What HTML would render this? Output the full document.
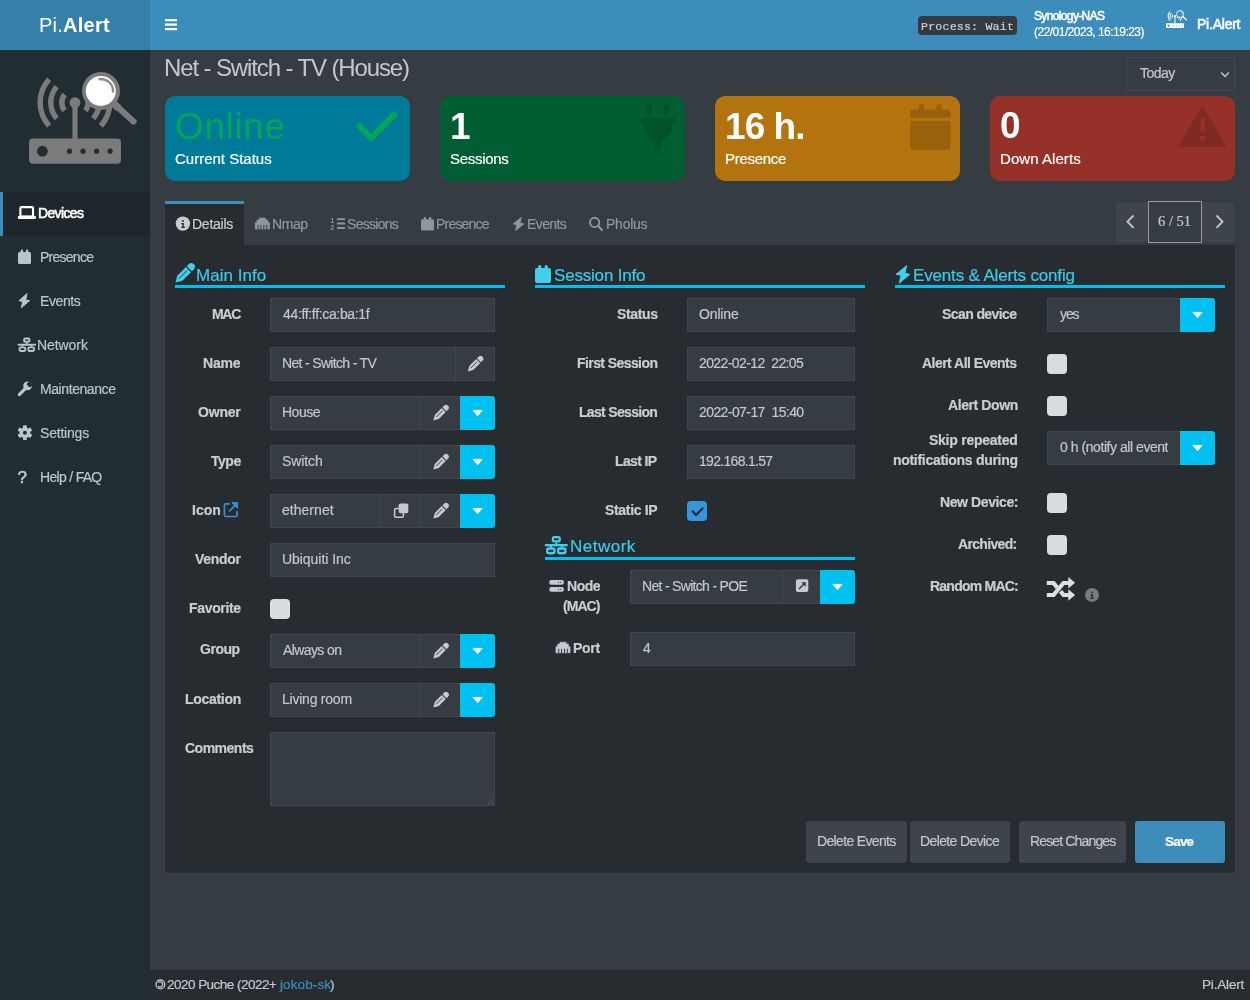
<!DOCTYPE html>
<html><head><meta charset="utf-8"><style>
html,body{margin:0;padding:0;width:1250px;height:1000px;overflow:hidden;background:#353c42;}
body>div, .t{position:absolute;}
div div{position:absolute;}
.t{white-space:pre;line-height:normal;font-family:"Liberation Sans",sans-serif;will-change:transform;-webkit-text-stroke:0.2px currentColor;}
svg{position:absolute;left:0;top:0;}
</style></head><body>
<div style="left:0px;top:0px;width:150px;height:50px;background:#367fa9;"></div>
<div style="left:150px;top:0px;width:1100px;height:50px;background:#3c8dbc;"></div>
<div style="left:0px;top:50px;width:150px;height:950px;background:#222d32;"></div>
<div style="left:0px;top:192px;width:150px;height:44px;background:#1e282c;"></div>
<div style="left:0px;top:192px;width:3px;height:44px;background:#3c8dbc;"></div>
<div style="left:918px;top:16px;width:99px;height:19px;background:#343a40;border-radius:4px;"></div>
<div style="left:1126px;top:57px;width:109px;height:34px;background:transparent;box-sizing:border-box;border:1px solid #40474d;"></div>
<div style="left:165px;top:96px;width:245px;height:85px;background:#007a99;border-radius:10px;"></div>
<div style="left:440px;top:96px;width:245px;height:85px;background:#005e32;border-radius:10px;"></div>
<div style="left:715px;top:96px;width:245px;height:85px;background:#b3730e;border-radius:10px;"></div>
<div style="left:990px;top:96px;width:245px;height:85px;background:#953128;border-radius:10px;"></div>
<div style="left:165px;top:201px;width:79px;height:3px;background:#3c8dbc;"></div>
<div style="left:165px;top:204px;width:79px;height:41px;background:#272c30;"></div>
<div style="left:1116px;top:202px;width:32px;height:40px;background:#3d444b;border-radius:3px 0 0 3px;"></div>
<div style="left:1202px;top:202px;width:32px;height:40px;background:#3d444b;border-radius:0 3px 3px 0;"></div>
<div style="left:1148px;top:201px;width:54px;height:42px;background:#353c42;box-sizing:border-box;border:1px solid #9a9a9a;"></div>
<div style="left:165px;top:245px;width:1070px;height:628px;background:#272c30;border-radius:0 0 3px 3px;"></div>
<div style="left:175px;top:285px;width:330px;height:3px;background:#00c0ef;"></div>
<div style="left:535px;top:285px;width:330px;height:3px;background:#00c0ef;"></div>
<div style="left:895px;top:285px;width:330px;height:3px;background:#00c0ef;"></div>
<div style="left:545px;top:557px;width:310px;height:3px;background:#00c0ef;"></div>
<div style="left:270px;top:298px;width:225px;height:34px;background:#353c42;box-sizing:border-box;border:1px solid #40474d;"></div>
<div style="left:270px;top:347px;width:186px;height:34px;background:#353c42;box-sizing:border-box;border:1px solid #40474d;"></div>
<div style="left:455px;top:347px;width:40px;height:34px;background:#353c42;box-sizing:border-box;border:1px solid #40474d;"></div>
<div style="left:270px;top:396px;width:151px;height:34px;background:#353c42;box-sizing:border-box;border:1px solid #40474d;"></div>
<div style="left:420px;top:396px;width:41px;height:34px;background:#353c42;box-sizing:border-box;border:1px solid #40474d;"></div>
<div style="left:460px;top:396px;width:35px;height:34px;background:#00c0ef;border-radius:0 3px 3px 0;"></div>
<div style="left:270px;top:445px;width:151px;height:34px;background:#353c42;box-sizing:border-box;border:1px solid #40474d;"></div>
<div style="left:420px;top:445px;width:41px;height:34px;background:#353c42;box-sizing:border-box;border:1px solid #40474d;"></div>
<div style="left:460px;top:445px;width:35px;height:34px;background:#00c0ef;border-radius:0 3px 3px 0;"></div>
<div style="left:270px;top:683px;width:151px;height:34px;background:#353c42;box-sizing:border-box;border:1px solid #40474d;"></div>
<div style="left:420px;top:683px;width:41px;height:34px;background:#353c42;box-sizing:border-box;border:1px solid #40474d;"></div>
<div style="left:460px;top:683px;width:35px;height:34px;background:#00c0ef;border-radius:0 3px 3px 0;"></div>
<div style="left:270px;top:634px;width:151px;height:34px;background:#353c42;box-sizing:border-box;border:1px solid #40474d;"></div>
<div style="left:420px;top:634px;width:41px;height:34px;background:#353c42;box-sizing:border-box;border:1px solid #40474d;"></div>
<div style="left:460px;top:634px;width:35px;height:34px;background:#00c0ef;border-radius:0 3px 3px 0;"></div>
<div style="left:270px;top:494px;width:111px;height:34px;background:#353c42;box-sizing:border-box;border:1px solid #40474d;"></div>
<div style="left:380px;top:494px;width:41px;height:34px;background:#353c42;box-sizing:border-box;border:1px solid #40474d;"></div>
<div style="left:420px;top:494px;width:41px;height:34px;background:#353c42;box-sizing:border-box;border:1px solid #40474d;"></div>
<div style="left:460px;top:494px;width:35px;height:34px;background:#00c0ef;border-radius:0 3px 3px 0;"></div>
<div style="left:270px;top:543px;width:225px;height:34px;background:#353c42;box-sizing:border-box;border:1px solid #40474d;"></div>
<div style="left:270px;top:599px;width:20px;height:20px;background:#d9dde0;border-radius:4px;"></div>
<div style="left:270px;top:732px;width:225px;height:74px;background:#353c42;box-sizing:border-box;border:1px solid #40474d;"></div>
<div style="left:687px;top:298px;width:168px;height:34px;background:#353c42;box-sizing:border-box;border:1px solid #40474d;"></div>
<div style="left:687px;top:347px;width:168px;height:34px;background:#353c42;box-sizing:border-box;border:1px solid #40474d;"></div>
<div style="left:687px;top:396px;width:168px;height:34px;background:#353c42;box-sizing:border-box;border:1px solid #40474d;"></div>
<div style="left:687px;top:445px;width:168px;height:34px;background:#353c42;box-sizing:border-box;border:1px solid #40474d;"></div>
<div style="left:687px;top:501px;width:20px;height:20px;background:#3796da;border-radius:4px;"></div>
<div style="left:630px;top:570px;width:153px;height:34px;background:#353c42;box-sizing:border-box;border:1px solid #40474d;"></div>
<div style="left:782px;top:570px;width:39px;height:34px;background:#353c42;box-sizing:border-box;border:1px solid #40474d;"></div>
<div style="left:820px;top:570px;width:35px;height:34px;background:#00c0ef;border-radius:0 3px 3px 0;"></div>
<div style="left:630px;top:632px;width:225px;height:34px;background:#353c42;box-sizing:border-box;border:1px solid #40474d;"></div>
<div style="left:1047px;top:298px;width:134px;height:34px;background:#353c42;box-sizing:border-box;border:1px solid #40474d;"></div>
<div style="left:1180px;top:298px;width:35px;height:34px;background:#00c0ef;border-radius:0 3px 3px 0;"></div>
<div style="left:1047px;top:354px;width:20px;height:20px;background:#d9dde0;border-radius:4px;"></div>
<div style="left:1047px;top:396px;width:20px;height:20px;background:#d9dde0;border-radius:4px;"></div>
<div style="left:1047px;top:493px;width:20px;height:20px;background:#d9dde0;border-radius:4px;"></div>
<div style="left:1047px;top:535px;width:20px;height:20px;background:#d9dde0;border-radius:4px;"></div>
<div style="left:1047px;top:431px;width:134px;height:34px;background:#353c42;box-sizing:border-box;border:1px solid #40474d;"></div>
<div style="left:1180px;top:431px;width:35px;height:34px;background:#00c0ef;border-radius:0 3px 3px 0;"></div>
<div style="left:806px;top:821px;width:101px;height:42px;background:#3d444b;border-radius:3px;"></div>
<div style="left:910px;top:821px;width:100px;height:42px;background:#3d444b;border-radius:3px;"></div>
<div style="left:1019px;top:821px;width:107px;height:42px;background:#3d444b;border-radius:3px;"></div>
<div style="left:1135px;top:821px;width:90px;height:42px;background:#3c8dbc;border-radius:3px;"></div>
<div style="left:150px;top:970px;width:1100px;height:30px;background:#272c30;"></div>
<div class="t" style="left:39.3px;top:14px;font-family:'Liberation Sans';font-size:20px;font-weight:400;letter-spacing:0.24px;color:#fff;-webkit-text-stroke:0;">Pi.<b>Alert</b></div>
<div class="t" style="left:921.4px;top:20px;font-family:'Liberation Mono';font-size:11.6px;font-weight:400;letter-spacing:0.20px;color:#d0d0d0;">Process: Wait</div>
<div class="t" style="left:1034.0px;top:9px;font-family:'Liberation Sans';font-size:12px;font-weight:400;letter-spacing:-0.64px;color:#fff;-webkit-text-stroke:0.55px currentColor;">Synology-NAS</div>
<div class="t" style="left:1034.0px;top:25px;font-family:'Liberation Sans';font-size:12px;font-weight:400;letter-spacing:-0.52px;color:#fff;">(22/01/2023, 16:19:23)</div>
<div class="t" style="left:1196.6px;top:15.7px;font-family:'Liberation Sans';font-size:14px;font-weight:400;letter-spacing:-0.23px;color:#fff;-webkit-text-stroke:0.55px currentColor;">Pi.Alert</div>
<div class="t" style="left:37.7px;top:205px;font-family:'Liberation Sans';font-size:14px;font-weight:400;letter-spacing:-0.65px;color:#fff;-webkit-text-stroke:0.55px currentColor;">Devices</div>
<div class="t" style="left:40.4px;top:249px;font-family:'Liberation Sans';font-size:14px;font-weight:400;letter-spacing:-0.74px;color:#b8c7ce;">Presence</div>
<div class="t" style="left:40.0px;top:293px;font-family:'Liberation Sans';font-size:14px;font-weight:400;letter-spacing:-0.40px;color:#b8c7ce;">Events</div>
<div class="t" style="left:37.4px;top:337px;font-family:'Liberation Sans';font-size:14px;font-weight:400;letter-spacing:-0.07px;color:#b8c7ce;">Network</div>
<div class="t" style="left:40.0px;top:381px;font-family:'Liberation Sans';font-size:14px;font-weight:400;letter-spacing:-0.42px;color:#b8c7ce;">Maintenance</div>
<div class="t" style="left:40.0px;top:425px;font-family:'Liberation Sans';font-size:14px;font-weight:400;letter-spacing:-0.20px;color:#b8c7ce;">Settings</div>
<div class="t" style="left:40.0px;top:469px;font-family:'Liberation Sans';font-size:14px;font-weight:400;letter-spacing:-0.69px;color:#b8c7ce;">Help / FAQ</div>
<div class="t" style="left:164.0px;top:54px;font-family:'Liberation Sans';font-size:24px;font-weight:400;letter-spacing:-1.12px;color:#c3c8cd;-webkit-text-stroke:0;">Net - Switch - TV (House)</div>
<div class="t" style="left:1140.0px;top:65px;font-family:'Liberation Sans';font-size:14px;font-weight:400;letter-spacing:-0.50px;color:#c3c8cd;">Today</div>
<div class="t" style="left:174.6px;top:106px;font-family:'Liberation Sans';font-size:37px;font-weight:400;letter-spacing:0.64px;color:#00a65a;-webkit-text-stroke:0;">Online</div>
<div class="t" style="left:175.0px;top:150.4px;font-family:'Liberation Sans';font-size:15px;font-weight:400;letter-spacing:0.00px;color:#fff;">Current Status</div>
<div class="t" style="left:450.0px;top:106px;font-family:'Liberation Sans';font-size:37px;font-weight:600;letter-spacing:0.00px;color:#fff;-webkit-text-stroke:0;">1</div>
<div class="t" style="left:450.0px;top:150.4px;font-family:'Liberation Sans';font-size:15px;font-weight:400;letter-spacing:-0.29px;color:#fff;">Sessions</div>
<div class="t" style="left:724.8px;top:106px;font-family:'Liberation Sans';font-size:37px;font-weight:600;letter-spacing:-0.95px;color:#fff;-webkit-text-stroke:0;">16 h.</div>
<div class="t" style="left:724.7px;top:150.4px;font-family:'Liberation Sans';font-size:15px;font-weight:400;letter-spacing:-0.30px;color:#fff;">Presence</div>
<div class="t" style="left:1000.4px;top:105px;font-family:'Liberation Sans';font-size:37px;font-weight:600;letter-spacing:0.00px;color:#fff;-webkit-text-stroke:0;">0</div>
<div class="t" style="left:999.7px;top:150.4px;font-family:'Liberation Sans';font-size:15px;font-weight:400;letter-spacing:0.06px;color:#fff;">Down Alerts</div>
<div class="t" style="left:192.3px;top:216px;font-family:'Liberation Sans';font-size:14px;font-weight:400;letter-spacing:-0.25px;color:#c8cdd2;">Details</div>
<div class="t" style="left:271.9px;top:216px;font-family:'Liberation Sans';font-size:14px;font-weight:400;letter-spacing:-0.43px;color:#8f979e;">Nmap</div>
<div class="t" style="left:347.0px;top:216px;font-family:'Liberation Sans';font-size:14px;font-weight:400;letter-spacing:-0.71px;color:#8f979e;">Sessions</div>
<div class="t" style="left:436.0px;top:216px;font-family:'Liberation Sans';font-size:14px;font-weight:400;letter-spacing:-0.80px;color:#8f979e;">Presence</div>
<div class="t" style="left:527.0px;top:216px;font-family:'Liberation Sans';font-size:14px;font-weight:400;letter-spacing:-0.60px;color:#8f979e;">Events</div>
<div class="t" style="left:605.6px;top:216px;font-family:'Liberation Sans';font-size:14px;font-weight:400;letter-spacing:-0.24px;color:#8f979e;">Pholus</div>
<div class="t" style="left:1158.0px;top:212.6px;font-family:'Liberation Serif';font-size:14.5px;font-weight:400;letter-spacing:0.00px;color:#c3c8cd;">6 / 51</div>
<div class="t" style="left:196.4px;top:266px;font-family:'Liberation Sans';font-size:17px;font-weight:400;letter-spacing:0.03px;color:#3fc9e9;">Main Info</div>
<div class="t" style="left:553.8px;top:266px;font-family:'Liberation Sans';font-size:17px;font-weight:400;letter-spacing:-0.19px;color:#3fc9e9;">Session Info</div>
<div class="t" style="left:913.4px;top:266px;font-family:'Liberation Sans';font-size:17px;font-weight:400;letter-spacing:-0.16px;color:#3fc9e9;">Events &amp; Alerts config</div>
<div class="t" style="left:570.4px;top:537px;font-family:'Liberation Sans';font-size:17px;font-weight:400;letter-spacing:0.50px;color:#3fc9e9;">Network</div>
<div class="t" style="left:212.0px;top:306px;font-family:'Liberation Sans';font-size:14px;font-weight:700;letter-spacing:-1.30px;color:#c9cdd1;">MAC</div>
<div class="t" style="left:203.0px;top:355px;font-family:'Liberation Sans';font-size:14px;font-weight:700;letter-spacing:-0.20px;color:#c9cdd1;">Name</div>
<div class="t" style="left:198.2px;top:404px;font-family:'Liberation Sans';font-size:14px;font-weight:700;letter-spacing:-0.20px;color:#c9cdd1;">Owner</div>
<div class="t" style="left:210.8px;top:453px;font-family:'Liberation Sans';font-size:14px;font-weight:700;letter-spacing:-0.47px;color:#c9cdd1;">Type</div>
<div class="t" style="left:191.5px;top:502px;font-family:'Liberation Sans';font-size:14px;font-weight:700;letter-spacing:0.00px;color:#c9cdd1;">Icon</div>
<div class="t" style="left:195.0px;top:551px;font-family:'Liberation Sans';font-size:14px;font-weight:700;letter-spacing:-0.30px;color:#c9cdd1;">Vendor</div>
<div class="t" style="left:188.7px;top:600px;font-family:'Liberation Sans';font-size:14px;font-weight:700;letter-spacing:-0.33px;color:#c9cdd1;">Favorite</div>
<div class="t" style="left:200.3px;top:641px;font-family:'Liberation Sans';font-size:14px;font-weight:700;letter-spacing:-0.48px;color:#c9cdd1;">Group</div>
<div class="t" style="left:184.5px;top:691px;font-family:'Liberation Sans';font-size:14px;font-weight:700;letter-spacing:-0.30px;color:#c9cdd1;">Location</div>
<div class="t" style="left:184.5px;top:740px;font-family:'Liberation Sans';font-size:14px;font-weight:700;letter-spacing:-0.50px;color:#c9cdd1;">Comments</div>
<div class="t" style="left:283.0px;top:306px;font-family:'Liberation Sans';font-size:14px;font-weight:400;letter-spacing:-0.34px;color:#c1c7cc;">44:ff:ff:ca:ba:1f</div>
<div class="t" style="left:282.3px;top:355px;font-family:'Liberation Sans';font-size:14px;font-weight:400;letter-spacing:-0.67px;color:#c1c7cc;">Net - Switch - TV</div>
<div class="t" style="left:282.0px;top:404px;font-family:'Liberation Sans';font-size:14px;font-weight:400;letter-spacing:-0.50px;color:#c1c7cc;">House</div>
<div class="t" style="left:282.0px;top:453px;font-family:'Liberation Sans';font-size:14px;font-weight:400;letter-spacing:-0.10px;color:#c1c7cc;">Switch</div>
<div class="t" style="left:282.0px;top:502px;font-family:'Liberation Sans';font-size:14px;font-weight:400;letter-spacing:0.03px;color:#c1c7cc;">ethernet</div>
<div class="t" style="left:282.2px;top:551px;font-family:'Liberation Sans';font-size:14px;font-weight:400;letter-spacing:-0.05px;color:#c1c7cc;">Ubiquiti Inc</div>
<div class="t" style="left:283.0px;top:642px;font-family:'Liberation Sans';font-size:14px;font-weight:400;letter-spacing:-0.60px;color:#c1c7cc;">Always on</div>
<div class="t" style="left:282.0px;top:691px;font-family:'Liberation Sans';font-size:14px;font-weight:400;letter-spacing:-0.23px;color:#c1c7cc;">Living room</div>
<div class="t" style="left:616.8px;top:306px;font-family:'Liberation Sans';font-size:14px;font-weight:700;letter-spacing:-0.36px;color:#c9cdd1;">Status</div>
<div class="t" style="left:577.0px;top:355px;font-family:'Liberation Sans';font-size:14px;font-weight:700;letter-spacing:-0.58px;color:#c9cdd1;">First Session</div>
<div class="t" style="left:578.5px;top:404px;font-family:'Liberation Sans';font-size:14px;font-weight:700;letter-spacing:-0.68px;color:#c9cdd1;">Last Session</div>
<div class="t" style="left:614.7px;top:453px;font-family:'Liberation Sans';font-size:14px;font-weight:700;letter-spacing:-0.62px;color:#c9cdd1;">Last IP</div>
<div class="t" style="left:604.6px;top:502px;font-family:'Liberation Sans';font-size:14px;font-weight:700;letter-spacing:-0.33px;color:#c9cdd1;">Static IP</div>
<div class="t" style="left:698.9px;top:306px;font-family:'Liberation Sans';font-size:14px;font-weight:400;letter-spacing:-0.14px;color:#c1c7cc;">Online</div>
<div class="t" style="left:699.0px;top:355px;font-family:'Liberation Sans';font-size:14px;font-weight:400;letter-spacing:-0.60px;color:#c1c7cc;">2022-02-12&nbsp; 22:05</div>
<div class="t" style="left:699.0px;top:404px;font-family:'Liberation Sans';font-size:14px;font-weight:400;letter-spacing:-0.58px;color:#c1c7cc;">2022-07-17&nbsp; 15:40</div>
<div class="t" style="left:699.0px;top:453px;font-family:'Liberation Sans';font-size:14px;font-weight:400;letter-spacing:-0.69px;color:#c1c7cc;">192.168.1.57</div>
<div class="t" style="left:566.8px;top:578px;font-family:'Liberation Sans';font-size:14px;font-weight:700;letter-spacing:-0.47px;color:#c9cdd1;">Node</div>
<div class="t" style="left:563.3px;top:598px;font-family:'Liberation Sans';font-size:14px;font-weight:700;letter-spacing:-0.97px;color:#c9cdd1;">(MAC)</div>
<div class="t" style="left:572.9px;top:640px;font-family:'Liberation Sans';font-size:14px;font-weight:700;letter-spacing:-0.30px;color:#c9cdd1;">Port</div>
<div class="t" style="left:642.3px;top:578px;font-family:'Liberation Sans';font-size:14px;font-weight:400;letter-spacing:-0.69px;color:#c1c7cc;">Net - Switch - POE</div>
<div class="t" style="left:643.0px;top:640px;font-family:'Liberation Sans';font-size:14px;font-weight:400;letter-spacing:0.00px;color:#c1c7cc;">4</div>
<div class="t" style="left:941.9px;top:306px;font-family:'Liberation Sans';font-size:14px;font-weight:700;letter-spacing:-0.59px;color:#c9cdd1;">Scan device</div>
<div class="t" style="left:922.0px;top:355px;font-family:'Liberation Sans';font-size:14px;font-weight:700;letter-spacing:-0.53px;color:#c9cdd1;">Alert All Events</div>
<div class="t" style="left:947.7px;top:397px;font-family:'Liberation Sans';font-size:14px;font-weight:700;letter-spacing:-0.41px;color:#c9cdd1;">Alert Down</div>
<div class="t" style="left:929.0px;top:432px;font-family:'Liberation Sans';font-size:14px;font-weight:700;letter-spacing:-0.25px;color:#c9cdd1;">Skip repeated</div>
<div class="t" style="left:892.7px;top:452px;font-family:'Liberation Sans';font-size:14px;font-weight:700;letter-spacing:-0.30px;color:#c9cdd1;">notifications during</div>
<div class="t" style="left:940.0px;top:494px;font-family:'Liberation Sans';font-size:14px;font-weight:700;letter-spacing:-0.40px;color:#c9cdd1;">New Device:</div>
<div class="t" style="left:958.4px;top:536px;font-family:'Liberation Sans';font-size:14px;font-weight:700;letter-spacing:-0.67px;color:#c9cdd1;">Archived:</div>
<div class="t" style="left:929.7px;top:578px;font-family:'Liberation Sans';font-size:14px;font-weight:700;letter-spacing:-0.77px;color:#c9cdd1;">Random MAC:</div>
<div class="t" style="left:1060.2px;top:306px;font-family:'Liberation Sans';font-size:14px;font-weight:400;letter-spacing:-1.10px;color:#c1c7cc;">yes</div>
<div style="left:1047px;top:431px;width:121px;height:34px;overflow:hidden"><div class="t" style="left:13.0px;top:8px;font-size:14px;font-weight:400;letter-spacing:-0.45px;color:#c1c7cc">0 h (notify all events)</div></div>
<div class="t" style="left:816.6px;top:833px;font-family:'Liberation Sans';font-size:14px;font-weight:400;letter-spacing:-0.66px;color:#c1c7cc;">Delete Events</div>
<div class="t" style="left:919.5px;top:833px;font-family:'Liberation Sans';font-size:14px;font-weight:400;letter-spacing:-0.62px;color:#c1c7cc;">Delete Device</div>
<div class="t" style="left:1029.6px;top:833px;font-family:'Liberation Sans';font-size:14px;font-weight:400;letter-spacing:-0.85px;color:#c1c7cc;">Reset Changes</div>
<div class="t" style="left:1165.4px;top:834px;font-family:'Liberation Sans';font-size:13.5px;font-weight:700;letter-spacing:-0.80px;color:#fff;">Save</div>
<div class="t" style="left:167.4px;top:977px;font-family:'Liberation Sans';font-size:13.5px;font-weight:400;letter-spacing:-0.53px;color:#c3c8cd;">2020 Puche (2022+</div>
<div class="t" style="left:279.6px;top:977px;font-family:'Liberation Sans';font-size:13.5px;font-weight:400;letter-spacing:0.11px;color:#3c8dbc;">jokob-sk</div>
<div class="t" style="left:330.4px;top:977px;font-family:'Liberation Sans';font-size:13.5px;font-weight:400;letter-spacing:0.00px;color:#c3c8cd;">)</div>
<div class="t" style="left:1202.2px;top:977px;font-family:'Liberation Sans';font-size:13.5px;font-weight:400;letter-spacing:-0.17px;color:#c3c8cd;">Pi.Alert</div>
<svg width="1250" height="1000" viewBox="0 0 1250 1000">
<g fill="#fff"><rect x="165" y="19" width="12" height="2.2"/><rect x="165" y="23.5" width="12" height="2.2"/><rect x="165" y="28" width="12" height="2.2"/></g>
<g fill="none" stroke="#7b7b7b" stroke-width="5.4" stroke-linecap="butt"><path d="M64.6,94.5 A13.2,13.2 0 0 0 64.6,110.7"/><path d="M85.4,94.5 A13.2,13.2 0 0 1 85.4,110.7"/><path d="M56.7,86.7 A24.2,24.2 0 0 0 56.7,118.5"/><path d="M93.3,86.7 A24.2,24.2 0 0 1 93.3,118.5"/><path d="M49.1,79.3 A34.8,34.8 0 0 0 49.1,125.9"/><path d="M100.9,79.3 A34.8,34.8 0 0 1 100.9,125.9"/></g><g fill="#7b7b7b"><rect x="29" y="138.6" width="92" height="25.2" rx="4"/><rect x="72.4" y="102" width="5.2" height="37"/><circle cx="75" cy="102.6" r="5.4"/></g><g fill="#222d32"><circle cx="42.4" cy="151.2" r="5.4"/><circle cx="69.5" cy="151.2" r="2.6"/><circle cx="83" cy="151.2" r="2.6"/><circle cx="96.6" cy="151.2" r="2.6"/><circle cx="110" cy="151.2" r="2.6"/></g><line x1="112" y1="102" x2="133.5" y2="121.5" stroke="#7b7b7b" stroke-width="6.2" stroke-linecap="round"/><line x1="112" y1="102" x2="119" y2="108.5" stroke="#7b7b7b" stroke-width="7.5"/><circle cx="101" cy="91" r="19" fill="#7b7b7b"/><circle cx="100.8" cy="91" r="15" fill="#fff"/><path d="M98.5,79.2 A12.2,12.2 0 0 1 113,92.5" fill="none" stroke="#7b7b7b" stroke-width="2.4" opacity="0.85"/>
<g transform="translate(1166,10) scale(0.195) translate(-29,-71)"><g fill="none" stroke="#fff" stroke-width="5.4" stroke-linecap="butt"><path d="M64.6,94.5 A13.2,13.2 0 0 0 64.6,110.7"/><path d="M85.4,94.5 A13.2,13.2 0 0 1 85.4,110.7"/><path d="M56.7,86.7 A24.2,24.2 0 0 0 56.7,118.5"/><path d="M93.3,86.7 A24.2,24.2 0 0 1 93.3,118.5"/><path d="M49.1,79.3 A34.8,34.8 0 0 0 49.1,125.9"/><path d="M100.9,79.3 A34.8,34.8 0 0 1 100.9,125.9"/></g><g fill="#fff"><rect x="29" y="138.6" width="92" height="25.2" rx="4"/><rect x="72.4" y="102" width="5.2" height="37"/><circle cx="75" cy="102.6" r="5.4"/></g><g fill="#3c8dbc"><circle cx="42.4" cy="151.2" r="5.4"/><circle cx="69.5" cy="151.2" r="2.6"/><circle cx="83" cy="151.2" r="2.6"/><circle cx="96.6" cy="151.2" r="2.6"/><circle cx="110" cy="151.2" r="2.6"/></g><line x1="112" y1="102" x2="133.5" y2="121.5" stroke="#fff" stroke-width="6.2" stroke-linecap="round"/><line x1="112" y1="102" x2="119" y2="108.5" stroke="#fff" stroke-width="7.5"/><circle cx="101" cy="91" r="19" fill="#fff"/><circle cx="100.8" cy="91" r="15" fill="#3c8dbc"/><path d="M98.5,79.2 A12.2,12.2 0 0 1 113,92.5" fill="none" stroke="#fff" stroke-width="2.4" opacity="0.85"/></g>
<g fill="none" stroke="#fff" stroke-width="2.1"><rect x="20.4" y="207.1" width="12.6" height="9.5" rx="1"/></g><rect x="17.9" y="215.8" width="18" height="3.3" rx="1.2" fill="#fff"/>
<g fill="#b8c7ce"><rect x="20.60" y="249.60" width="2.60" height="3.60" rx="1.30"/><rect x="25.80" y="249.60" width="2.60" height="3.60" rx="1.30"/><rect x="18" y="251.90" width="13" height="12.10" rx="1.56"/></g>
<path d="M27.06,293.65 L18.92,300.70 L22.77,301.45 L21.34,307.75 L29.48,300.70 L25.63,299.95z" fill="#b8c7ce" stroke="#b8c7ce" stroke-width="1" stroke-linejoin="round"/>
<g fill="none" stroke="#b8c7ce" stroke-width="1.9"><rect x="24.11" y="338.55" width="5.38" height="3.25" rx="1.14"/><line x1="26.80" y1="342.75" x2="26.80" y2="344.75"/><line x1="17.70" y1="344.75" x2="35.90" y2="344.75"/><line x1="22.43" y1="344.75" x2="22.43" y2="346.47"/><rect x="19.56" y="347.42" width="5.74" height="3.53" rx="1.14"/><line x1="31.17" y1="344.75" x2="31.17" y2="346.47"/><rect x="28.30" y="347.42" width="5.74" height="3.53" rx="1.14"/></g>
<g fill="#b8c7ce"><path d="M19.3,394.6 L26.3,387.6" stroke="#b8c7ce" stroke-width="3.2" stroke-linecap="round"/><circle cx="27.6" cy="385.8" r="4.4"/></g><path d="M29.2,381.3 l-2.6,2.6 l1.4,2.2 l2.2,1.4 l2.6,-2.6" fill="#222d32"/>
<g transform="translate(24.9,432.7)" fill="#b8c7ce"><rect x="-1.9" y="-7.4" width="3.8" height="3.6" rx="0.8" transform="rotate(0)"/><rect x="-1.9" y="-7.4" width="3.8" height="3.6" rx="0.8" transform="rotate(60)"/><rect x="-1.9" y="-7.4" width="3.8" height="3.6" rx="0.8" transform="rotate(120)"/><rect x="-1.9" y="-7.4" width="3.8" height="3.6" rx="0.8" transform="rotate(180)"/><rect x="-1.9" y="-7.4" width="3.8" height="3.6" rx="0.8" transform="rotate(240)"/><rect x="-1.9" y="-7.4" width="3.8" height="3.6" rx="0.8" transform="rotate(300)"/><circle r="5.4"/><circle r="2" fill="#222d32"/></g>
<text x="17.4" y="483" font-family="Liberation Sans" font-size="17" fill="#b8c7ce" stroke="#b8c7ce" stroke-width="0.6">?</text>
<polyline points="359.5,126 371,137.6 394.5,114.5" fill="none" stroke="#00a65a" stroke-width="6" stroke-linecap="round" stroke-linejoin="round"/>
<g fill="#00522b"><rect x="646.6" y="104" width="5.4" height="11" rx="2.5"/><rect x="664.2" y="104" width="5.4" height="11" rx="2.5"/><rect x="640.8" y="118" width="34.6" height="5.8" rx="2.9"/><path d="M644,123 h28 v3 a14,14 0 0 1 -11,13.6 v8 a3,3 0 0 1 -6,0 v-8 a14,14 0 0 1 -11,-13.6 z"/></g>
<g fill="#98620c"><rect x="918.86" y="103.70" width="5.40" height="9.22" rx="2.70"/><rect x="936.40" y="103.70" width="5.40" height="9.22" rx="2.70"/><path d="M910.2,112.42 a3,3 0 0 1 3,-3 h34.30 a3,3 0 0 1 3,3 v5.30 h-40.30 z"/><path d="M910.2,121.11 h40.30 v25.69 a3,3 0 0 1 -3,3 h-34.30 a3,3 0 0 1 -3,-3 z"/></g>
<path d="M1202.4,108.2 L1224.1,145.4 L1180.7,145.4 z" fill="#7f2a22" stroke="#7f2a22" stroke-width="3" stroke-linejoin="round"/>
<rect x="1200.3" y="118" width="4.5" height="14" rx="2.2" fill="#953128"/><circle cx="1202.5" cy="138.2" r="2.6" fill="#953128"/>
<circle cx="182.9" cy="223.6" r="7.2" fill="#c8cdd2"/><rect x="182" y="220.2" width="1.8" height="1.6" fill="#272c30"/><path d="M181.3,222.9 h2.5 v3.8 h1.1 v1.3 h-3.6 v-1.3 h1 v-2.5 h-1 z" fill="#272c30"/>
<path d="M255.2,222.62 L256.928,222.62 L256.928,219.98 L259.23199999999997,219.98 L259.23199999999997,218 L265.568,218 L265.568,219.98 L267.872,219.98 L267.872,222.62 L269.59999999999997,222.62 L269.59999999999997,229 L255.2,229 z" fill="#8f979e" stroke="#8f979e" stroke-width="0.6" stroke-linejoin="round"/><rect x="257.63" y="224.82" width="0.9" height="4.18" fill="#353c42"/><rect x="260.51" y="224.82" width="0.9" height="4.18" fill="#353c42"/><rect x="263.39" y="224.82" width="0.9" height="4.18" fill="#353c42"/><rect x="266.27" y="224.82" width="0.9" height="4.18" fill="#353c42"/>
<g fill="#8f979e"><rect x="336.8" y="218.2" width="8.4" height="1.9" rx="0.9"/><rect x="336.8" y="222.6" width="8.4" height="1.9" rx="0.9"/><rect x="336.8" y="227" width="8.4" height="1.9" rx="0.9"/></g><text x="330.6" y="223" font-family="Liberation Sans" font-weight="bold" font-size="6.5" fill="#8f979e">1</text><text x="330.6" y="229.8" font-family="Liberation Sans" font-weight="bold" font-size="6.5" fill="#8f979e">2</text>
<g fill="#8f979e"><rect x="423.60" y="217.00" width="2.60" height="3.40" rx="1.30"/><rect x="428.80" y="217.00" width="2.60" height="3.40" rx="1.30"/><rect x="421" y="219.18" width="13" height="11.42" rx="1.56"/></g>
<path d="M521.36,217.41 L513.22,223.90 L517.07,224.59 L515.64,230.39 L523.78,223.90 L519.93,223.21z" fill="#8f979e" stroke="#8f979e" stroke-width="1" stroke-linejoin="round"/>
<circle cx="594.6" cy="222.4" r="4.6" fill="none" stroke="#8f979e" stroke-width="1.9"/><line x1="597.8" y1="225.8" x2="602" y2="230" stroke="#8f979e" stroke-width="2.1" stroke-linecap="round"/>
<polyline points="1133.5,215.5 1127.5,221.7 1133.5,227.8" fill="none" stroke="#c3c8cd" stroke-width="1.8"/>
<polyline points="1216.5,215.5 1222.5,221.7 1216.5,227.8" fill="none" stroke="#c3c8cd" stroke-width="1.8"/>
<polyline points="1221.2,72.5 1225,76.4 1228.8,72.5" fill="none" stroke="#c3c8cd" stroke-width="1.5"/>
<g transform="translate(175.5,282.6) rotate(-45)" fill="#41cfec"><path d="M0,0 L6.12,-3.60 L18.36,-3.60 L18.36,3.60 L6.12,3.60 z"/><path d="M19.63,-3.60 L22.26,-3.60 A3.6,3.6 0 0 1 22.26,3.60 L19.63,3.60 z"/><line x1="5.51" y1="-0.36" x2="16.89" y2="-0.36" stroke="#272c30" stroke-width="0.9"/></g>
<g fill="#41cfec"><rect x="538.20" y="265.00" width="3.20" height="4.50" rx="1.60"/><rect x="544.60" y="265.00" width="3.20" height="4.50" rx="1.60"/><rect x="535" y="267.88" width="16" height="15.12" rx="1.92"/></g>
<path d="M906.74,265.56 L896.09,274.35 L901.13,275.29 L899.26,283.14 L909.91,274.35 L904.87,273.42z" fill="#41cfec" stroke="#41cfec" stroke-width="1" stroke-linejoin="round"/>
<g fill="none" stroke="#41cfec" stroke-width="2.3"><rect x="552.89" y="537.05" width="6.82" height="4.36" rx="1.38"/><line x1="556.30" y1="542.56" x2="556.30" y2="545.15"/><line x1="544.90" y1="545.15" x2="567.70" y2="545.15"/><line x1="550.83" y1="545.15" x2="550.83" y2="547.37"/><rect x="547.19" y="548.52" width="7.28" height="4.73" rx="1.38"/><line x1="561.77" y1="545.15" x2="561.77" y2="547.37"/><rect x="558.13" y="548.52" width="7.28" height="4.73" rx="1.38"/></g>
<g transform="translate(467.8,371.4) rotate(-45)" fill="#c5cad0"><path d="M0,0 L4.92,-2.80 L14.76,-2.80 L14.76,2.80 L4.92,2.80 z"/><path d="M15.79,-2.80 L17.98,-2.80 A2.8,2.8 0 0 1 17.98,2.80 L15.79,2.80 z"/><line x1="4.43" y1="-0.28" x2="13.58" y2="-0.28" stroke="#353c42" stroke-width="0.9"/></g>
<g transform="translate(433.3,420.4) rotate(-45)" fill="#c5cad0"><path d="M0,0 L4.92,-2.80 L14.76,-2.80 L14.76,2.80 L4.92,2.80 z"/><path d="M15.79,-2.80 L17.98,-2.80 A2.8,2.8 0 0 1 17.98,2.80 L15.79,2.80 z"/><line x1="4.43" y1="-0.28" x2="13.58" y2="-0.28" stroke="#353c42" stroke-width="0.9"/></g>
<g transform="translate(433.3,469.4) rotate(-45)" fill="#c5cad0"><path d="M0,0 L4.92,-2.80 L14.76,-2.80 L14.76,2.80 L4.92,2.80 z"/><path d="M15.79,-2.80 L17.98,-2.80 A2.8,2.8 0 0 1 17.98,2.80 L15.79,2.80 z"/><line x1="4.43" y1="-0.28" x2="13.58" y2="-0.28" stroke="#353c42" stroke-width="0.9"/></g>
<g transform="translate(433.3,518.4) rotate(-45)" fill="#c5cad0"><path d="M0,0 L4.92,-2.80 L14.76,-2.80 L14.76,2.80 L4.92,2.80 z"/><path d="M15.79,-2.80 L17.98,-2.80 A2.8,2.8 0 0 1 17.98,2.80 L15.79,2.80 z"/><line x1="4.43" y1="-0.28" x2="13.58" y2="-0.28" stroke="#353c42" stroke-width="0.9"/></g>
<g transform="translate(433.3,658.4) rotate(-45)" fill="#c5cad0"><path d="M0,0 L4.92,-2.80 L14.76,-2.80 L14.76,2.80 L4.92,2.80 z"/><path d="M15.79,-2.80 L17.98,-2.80 A2.8,2.8 0 0 1 17.98,2.80 L15.79,2.80 z"/><line x1="4.43" y1="-0.28" x2="13.58" y2="-0.28" stroke="#353c42" stroke-width="0.9"/></g>
<g transform="translate(433.3,707.4) rotate(-45)" fill="#c5cad0"><path d="M0,0 L4.92,-2.80 L14.76,-2.80 L14.76,2.80 L4.92,2.80 z"/><path d="M15.79,-2.80 L17.98,-2.80 A2.8,2.8 0 0 1 17.98,2.80 L15.79,2.80 z"/><line x1="4.43" y1="-0.28" x2="13.58" y2="-0.28" stroke="#353c42" stroke-width="0.9"/></g>
<path d="M473.0,410.4 h9.2 l-4.6,5.4 z" fill="#fff" stroke="#fff" stroke-width="0.8" stroke-linejoin="round"/>
<path d="M473.0,459.4 h9.2 l-4.6,5.4 z" fill="#fff" stroke="#fff" stroke-width="0.8" stroke-linejoin="round"/>
<path d="M473.0,508.4 h9.2 l-4.6,5.4 z" fill="#fff" stroke="#fff" stroke-width="0.8" stroke-linejoin="round"/>
<path d="M473.0,648.4 h9.2 l-4.6,5.4 z" fill="#fff" stroke="#fff" stroke-width="0.8" stroke-linejoin="round"/>
<path d="M473.0,697.4 h9.2 l-4.6,5.4 z" fill="#fff" stroke="#fff" stroke-width="0.8" stroke-linejoin="round"/>
<path d="M832.9,584.4 h9.2 l-4.6,5.4 z" fill="#fff" stroke="#fff" stroke-width="0.8" stroke-linejoin="round"/>
<path d="M1192.9,312.4 h9.2 l-4.6,5.4 z" fill="#fff" stroke="#fff" stroke-width="0.8" stroke-linejoin="round"/>
<path d="M1192.9,445.4 h9.2 l-4.6,5.4 z" fill="#fff" stroke="#fff" stroke-width="0.8" stroke-linejoin="round"/>
<rect x="394.6" y="508.4" width="8.8" height="8.8" rx="1.3" fill="none" stroke="#c5cad0" stroke-width="1.5"/><rect x="398.7" y="503.6" width="9.6" height="9.6" rx="1.6" fill="#c5cad0" stroke="#353c42" stroke-width="0"/>
<g fill="none" stroke="#3c8ecc" stroke-width="1.7" stroke-linecap="round" stroke-linejoin="round"><path d="M229,503.8 h-3 a1.6,1.6 0 0 0 -1.6,1.6 v9.5 a1.6,1.6 0 0 0 1.6,1.6 h9.5 a1.6,1.6 0 0 0 1.6,-1.6 v-3"/><path d="M229.5,511 L237.2,503.4"/></g><path d="M231.8,502.6 h5.8 v5.8 z" fill="#3c8ecc" stroke="#3c8ecc" stroke-width="1" stroke-linejoin="round"/>
<g fill="#c5cad0"><rect x="549.3" y="579.9" width="14.6" height="4.8" rx="2"/><rect x="549.3" y="586.9" width="14.6" height="4.9" rx="2"/></g><g fill="#272c30"><rect x="558" y="581.9" width="1.1" height="1"/><rect x="560.2" y="581.9" width="1.1" height="1"/><rect x="558" y="588.9" width="1.1" height="1"/><rect x="560.2" y="588.9" width="1.1" height="1"/></g>
<path d="M555.9,646.652 L557.6039999999999,646.652 L557.6039999999999,644.1080000000001 L559.876,644.1080000000001 L559.876,642.2 L566.124,642.2 L566.124,644.1080000000001 L568.396,644.1080000000001 L568.396,646.652 L570.1,646.652 L570.1,652.8000000000001 L555.9,652.8000000000001 z" fill="#c5cad0" stroke="#c5cad0" stroke-width="0.6" stroke-linejoin="round"/><rect x="558.29" y="648.77" width="0.9" height="4.03" fill="#272c30"/><rect x="561.13" y="648.77" width="0.9" height="4.03" fill="#272c30"/><rect x="563.97" y="648.77" width="0.9" height="4.03" fill="#272c30"/><rect x="566.81" y="648.77" width="0.9" height="4.03" fill="#272c30"/>
<rect x="795.9" y="579.2" width="12.4" height="12.8" rx="2" fill="#c5cad0"/><path d="M799,589 L805,583" stroke="#353c42" stroke-width="1.6"/><path d="M801.2,582.2 h4.6 v4.6 z" fill="#353c42"/>
<polyline points="692.7,511.6 696,514.9 702.5,508.4" fill="none" stroke="#23272b" stroke-width="2.1" stroke-linecap="round" stroke-linejoin="round"/>
<g fill="none" stroke="#dcdfe3" stroke-width="4.2" stroke-linejoin="miter"><path d="M1046.8,595 H1053.5 L1063.5,583 H1069"/><path d="M1046.8,583 H1053.5 L1057.3,587.6"/><path d="M1060.6,591.2 L1063.5,595 H1069"/></g><g fill="#dcdfe3"><path d="M1068.3,577 L1075.1,582.8 L1068.3,588.5z"/><path d="M1068.3,589.3 L1075.1,595 L1068.3,600.7z"/></g>
<circle cx="1092" cy="594.9" r="7" fill="#7b7b7b"/><rect x="1091.3" y="591.6" width="1.6" height="1.4" fill="#2a2a2a"/><path d="M1090.6,594 h2.3 v3.5 h1 v1.2 h-3.4 v-1.2 h0.9 v-2.3 h-0.8 z" fill="#2a2a2a"/>
<g stroke="#5b6168" stroke-width="0.8"><line x1="488" y1="804" x2="493" y2="799"/><line x1="491" y1="804" x2="493" y2="802"/></g>
<circle cx="160.4" cy="984.4" r="4.4" fill="none" stroke="#c3c8cd" stroke-width="1.3"/><path d="M158.2,982.6 A2.6,2.6 0 1 1 158.2,986.2" fill="none" stroke="#c3c8cd" stroke-width="1.3"/>
</svg>
</body></html>
